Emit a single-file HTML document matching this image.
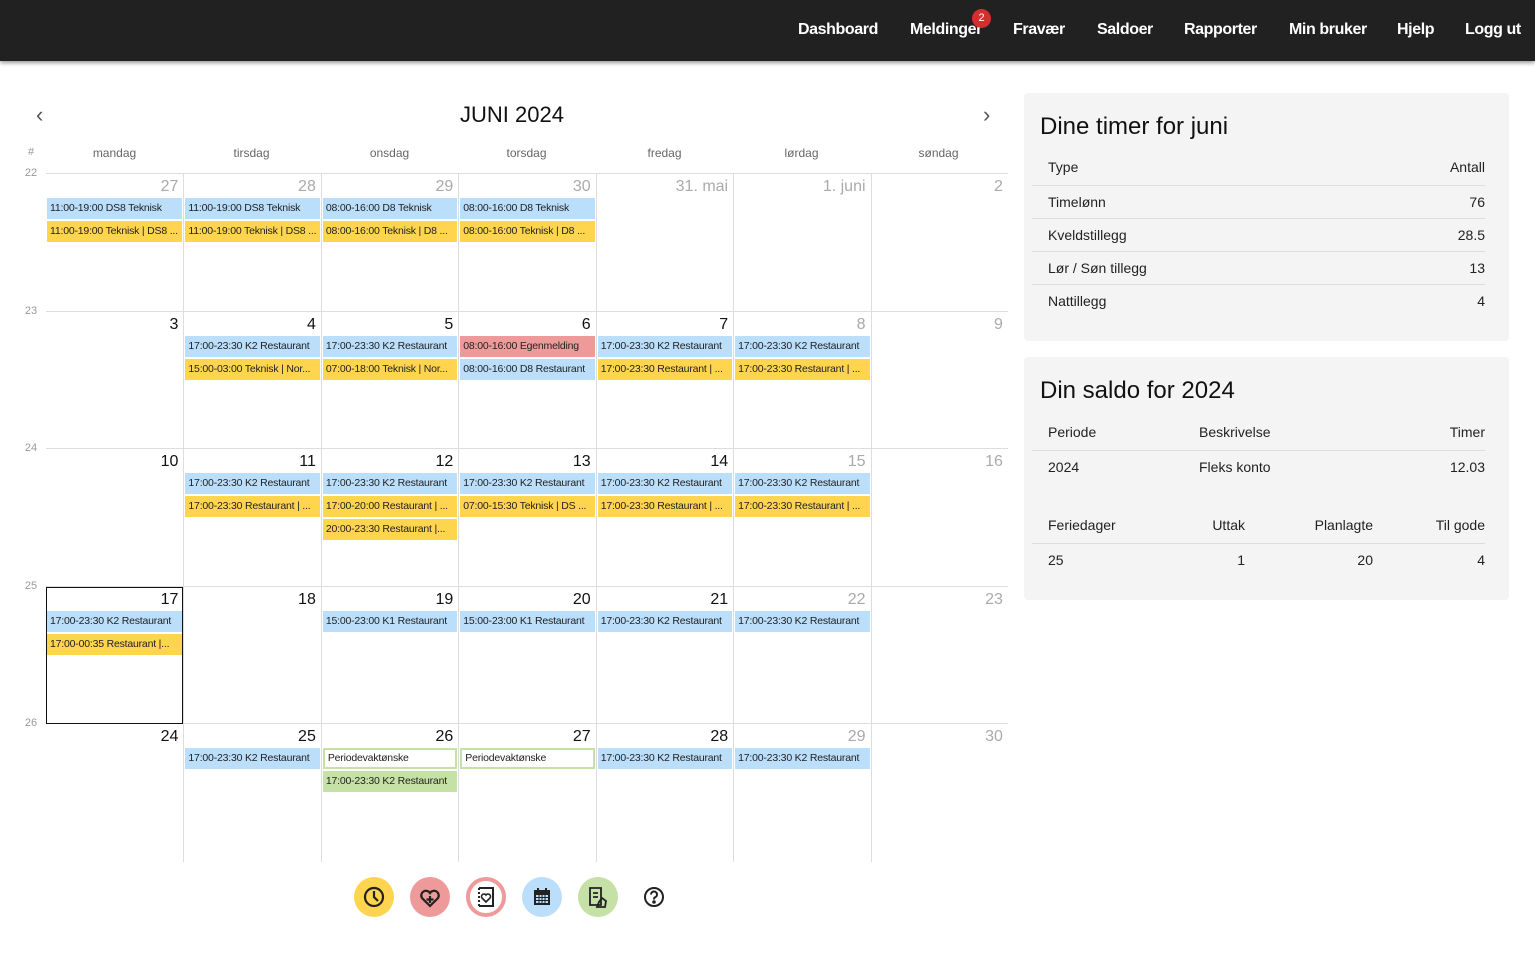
<!DOCTYPE html>
<html><head><meta charset="utf-8"><style>
*{box-sizing:border-box;margin:0;padding:0}
body{width:1535px;height:957px;background:#fff;font-family:"Liberation Sans",sans-serif;color:#222;position:relative;overflow:hidden}
.nav{position:absolute;left:0;top:0;width:1535px;height:61px;background:#212121;box-shadow:0 2px 4px rgba(0,0,0,.4)}
.nav span{position:absolute;top:21px;color:#fff;font-size:16px;font-weight:bold;letter-spacing:-.4px}
.badge{position:absolute;left:972px;top:9px;width:19px;height:19px;border-radius:50%;background:#d32f2f;color:#fff;font-size:11px;text-align:center;line-height:19px}
.title{position:absolute;left:460px;top:102px;font-size:22px;color:#111}
.arr{position:absolute;top:102px;font-size:22px;color:#555}
.dn{position:absolute;top:146px;font-size:12px;color:#666;width:137px;text-align:center}
.wk{position:absolute;left:18px;width:26px;text-align:center;font-size:11px;color:#999}
.grid{position:absolute;left:46px;top:173px;width:962px}
.row{display:flex;height:137.5px;border-top:1px solid #ddd}
.c{position:relative;width:137.43px;height:137.5px;border-left:1px solid #ddd}
.c:first-child{border-left:none}
.n{position:absolute;right:5px;top:4px;font-size:16px;color:#111}
.g .n{color:#aaa}
.e{position:absolute;left:1px;right:1px;height:21px;font-size:10.5px;line-height:21px;padding-left:3px;white-space:nowrap;overflow:hidden;color:#222;letter-spacing:-.2px}
.b{background:#bbdefb}.y{background:#ffd54f}.r{background:#ef9a9a}.gr{background:#c5e1a5}.o{background:#fff;border:2px solid #c5e1a5;line-height:17px}
.e1{top:24px}.e2{top:47px}.e3{top:70px}
.today{outline:1px solid #111;outline-offset:-1px;border-left:none}
.panel{position:absolute;left:1024px;width:485px;background:#f4f4f4;border-radius:4px}
.panel h2{position:absolute;left:16px;top:20px;font-size:24px;font-weight:normal;color:#111}
.tr{position:absolute;left:8px;right:24px;font-size:14px;color:#222}
.tr span{position:absolute}
.ln{position:absolute;left:8px;right:24px;height:1px;background:#ddd}
.ic{position:absolute;top:877px;width:40px;height:40px;border-radius:50%}
</style></head><body>
<div class="nav">
<span style="left:798px">Dashboard</span>
<span style="left:910px">Meldinger</span><div class="badge">2</div>
<span style="left:1013px">Fravær</span>
<span style="left:1097px">Saldoer</span>
<span style="left:1184px">Rapporter</span>
<span style="left:1289px">Min bruker</span>
<span style="left:1397px">Hjelp</span>
<span style="left:1465px">Logg ut</span>
</div>
<div class="arr" style="left:36px">‹</div>
<div class="arr" style="left:983px">›</div>
<div class="title">JUNI 2024</div>
<div class="wk" style="top:146px">#</div>
<div class="dn" style="left:46px">mandag</div><div class="dn" style="left:183px">tirsdag</div><div class="dn" style="left:321px">onsdag</div><div class="dn" style="left:458px">torsdag</div><div class="dn" style="left:596px">fredag</div><div class="dn" style="left:733px">lørdag</div><div class="dn" style="left:870px">søndag</div>
<div class="wk" style="top:167px">22</div><div class="wk" style="top:305px">23</div><div class="wk" style="top:442px">24</div><div class="wk" style="top:580px">25</div><div class="wk" style="top:717px">26</div>
<div class="grid">
<div class="row">
<div class="c g"><div class="n">27</div><div class="e b e1">11:00-19:00 DS8 Teknisk</div><div class="e y e2">11:00-19:00 Teknisk | DS8 ...</div></div>
<div class="c g"><div class="n">28</div><div class="e b e1">11:00-19:00 DS8 Teknisk</div><div class="e y e2">11:00-19:00 Teknisk | DS8 ...</div></div>
<div class="c g"><div class="n">29</div><div class="e b e1">08:00-16:00 D8 Teknisk</div><div class="e y e2">08:00-16:00 Teknisk | D8 ...</div></div>
<div class="c g"><div class="n">30</div><div class="e b e1">08:00-16:00 D8 Teknisk</div><div class="e y e2">08:00-16:00 Teknisk | D8 ...</div></div>
<div class="c g"><div class="n">31. mai</div></div>
<div class="c g"><div class="n">1. juni</div></div>
<div class="c g"><div class="n">2</div></div>
</div>
<div class="row">
<div class="c"><div class="n">3</div></div>
<div class="c"><div class="n">4</div><div class="e b e1">17:00-23:30 K2 Restaurant</div><div class="e y e2">15:00-03:00 Teknisk | Nor...</div></div>
<div class="c"><div class="n">5</div><div class="e b e1">17:00-23:30 K2 Restaurant</div><div class="e y e2">07:00-18:00 Teknisk | Nor...</div></div>
<div class="c"><div class="n">6</div><div class="e r e1">08:00-16:00 Egenmelding</div><div class="e b e2">08:00-16:00 D8 Restaurant</div></div>
<div class="c"><div class="n">7</div><div class="e b e1">17:00-23:30 K2 Restaurant</div><div class="e y e2">17:00-23:30 Restaurant | ...</div></div>
<div class="c g"><div class="n">8</div><div class="e b e1">17:00-23:30 K2 Restaurant</div><div class="e y e2">17:00-23:30 Restaurant | ...</div></div>
<div class="c g"><div class="n">9</div></div>
</div>
<div class="row">
<div class="c"><div class="n">10</div></div>
<div class="c"><div class="n">11</div><div class="e b e1">17:00-23:30 K2 Restaurant</div><div class="e y e2">17:00-23:30 Restaurant | ...</div></div>
<div class="c"><div class="n">12</div><div class="e b e1">17:00-23:30 K2 Restaurant</div><div class="e y e2">17:00-20:00 Restaurant | ...</div><div class="e y e3">20:00-23:30 Restaurant |...</div></div>
<div class="c"><div class="n">13</div><div class="e b e1">17:00-23:30 K2 Restaurant</div><div class="e y e2">07:00-15:30 Teknisk | DS ...</div></div>
<div class="c"><div class="n">14</div><div class="e b e1">17:00-23:30 K2 Restaurant</div><div class="e y e2">17:00-23:30 Restaurant | ...</div></div>
<div class="c g"><div class="n">15</div><div class="e b e1">17:00-23:30 K2 Restaurant</div><div class="e y e2">17:00-23:30 Restaurant | ...</div></div>
<div class="c g"><div class="n">16</div></div>
</div>
<div class="row">
<div class="c today"><div class="n">17</div><div class="e b e1">17:00-23:30 K2 Restaurant</div><div class="e y e2">17:00-00:35 Restaurant |...</div></div>
<div class="c"><div class="n">18</div></div>
<div class="c"><div class="n">19</div><div class="e b e1">15:00-23:00 K1 Restaurant</div></div>
<div class="c"><div class="n">20</div><div class="e b e1">15:00-23:00 K1 Restaurant</div></div>
<div class="c"><div class="n">21</div><div class="e b e1">17:00-23:30 K2 Restaurant</div></div>
<div class="c g"><div class="n">22</div><div class="e b e1">17:00-23:30 K2 Restaurant</div></div>
<div class="c g"><div class="n">23</div></div>
</div>
<div class="row">
<div class="c"><div class="n">24</div></div>
<div class="c"><div class="n">25</div><div class="e b e1">17:00-23:30 K2 Restaurant</div></div>
<div class="c"><div class="n">26</div><div class="e o e1">Periodevaktønske</div><div class="e gr e2">17:00-23:30 K2 Restaurant</div></div>
<div class="c"><div class="n">27</div><div class="e o e1">Periodevaktønske</div></div>
<div class="c"><div class="n">28</div><div class="e b e1">17:00-23:30 K2 Restaurant</div></div>
<div class="c g"><div class="n">29</div><div class="e b e1">17:00-23:30 K2 Restaurant</div></div>
<div class="c g"><div class="n">30</div></div>
</div>
</div>

<div class="panel" style="top:93px;height:248px">
<h2>Dine timer for juni</h2>
<div class="tr" style="top:66px"><span style="left:16px">Type</span><span style="right:0">Antall</span></div>
<div class="ln" style="top:92px"></div>
<div class="tr" style="top:101px"><span style="left:16px">Timelønn</span><span style="right:0">76</span></div>
<div class="ln" style="top:125px"></div>
<div class="tr" style="top:134px"><span style="left:16px">Kveldstillegg</span><span style="right:0">28.5</span></div>
<div class="ln" style="top:158px"></div>
<div class="tr" style="top:167px"><span style="left:16px">Lør / Søn tillegg</span><span style="right:0">13</span></div>
<div class="ln" style="top:191px"></div>
<div class="tr" style="top:200px"><span style="left:16px">Nattillegg</span><span style="right:0">4</span></div>
</div>

<div class="panel" style="top:357px;height:243px">
<h2>Din saldo for 2024</h2>
<div class="tr" style="top:67px"><span style="left:16px">Periode</span><span style="left:167px">Beskrivelse</span><span style="right:0">Timer</span></div>
<div class="ln" style="top:93px"></div>
<div class="tr" style="top:102px"><span style="left:16px">2024</span><span style="left:167px">Fleks konto</span><span style="right:0">12.03</span></div>
<div class="tr" style="top:160px"><span style="left:16px">Feriedager</span><span style="right:240px">Uttak</span><span style="right:112px">Planlagte</span><span style="right:0">Til gode</span></div>
<div class="ln" style="top:186px"></div>
<div class="tr" style="top:195px"><span style="left:16px">25</span><span style="right:240px">1</span><span style="right:112px">20</span><span style="right:0">4</span></div>
</div>

<div class="ic" style="left:354px;background:#ffd54f"><svg width="40" height="40" viewBox="0 0 40 40" fill="none" stroke="#222" stroke-width="2.2"><circle cx="20" cy="20" r="9"/><path d="M20 14v6l4 4"/></svg></div>
<div class="ic" style="left:410px;background:#ef9a9a"><svg width="40" height="40" viewBox="0 0 40 40" fill="none" stroke="#222" stroke-width="2.2"><path d="M20 29l-8-8a4.5 4.5 0 0 1 8-5 4.5 4.5 0 0 1 8 5z"/><path d="M20 19v7M16.5 22.5h7"/></svg></div>
<div class="ic" style="left:466px;background:#fff;border:4px solid #ef9a9a"><svg width="32" height="32" viewBox="0 0 32 32" fill="none" stroke="#222" stroke-width="2"><path d="M9 7h14v18H9" /><path d="M9 7v18" stroke-dasharray="2 2"/><path d="M16 21l-4-4a2.5 2.5 0 0 1 4-3 2.5 2.5 0 0 1 4 3z" stroke-width="1.6"/></svg></div>
<div class="ic" style="left:522px;background:#bbdefb"><svg width="40" height="40" viewBox="0 0 40 40"><rect x="12" y="13" width="16" height="15" fill="#222"/><rect x="14" y="18" width="12" height="8" fill="#bbdefb"/><rect x="15" y="11" width="2" height="4" fill="#222"/><rect x="23" y="11" width="2" height="4" fill="#222"/><path d="M14 20.5h12M14 23.5h12M17 18v8M20 18v8M23 18v8" stroke="#222" stroke-width="1"/></svg></div>
<div class="ic" style="left:578px;background:#c5e1a5"><svg width="40" height="40" viewBox="0 0 40 40" fill="none" stroke="#222" stroke-width="1.8"><path d="M12 11h11v17H12z"/><path d="M15 16h5M15 20h5"/><path d="M19 30l2-5 3-4 4 3-1 6z"/></svg></div>
<div class="ic" style="left:634px"><svg width="40" height="40" viewBox="0 0 40 40" fill="none" stroke="#222" stroke-width="2"><circle cx="20" cy="20" r="9"/><path d="M17 17.5a3 3 0 1 1 4 2.8c-1 .5-1 1-1 2.2"/><circle cx="20" cy="25" r=".8" fill="#222"/></svg></div>
</body></html>
